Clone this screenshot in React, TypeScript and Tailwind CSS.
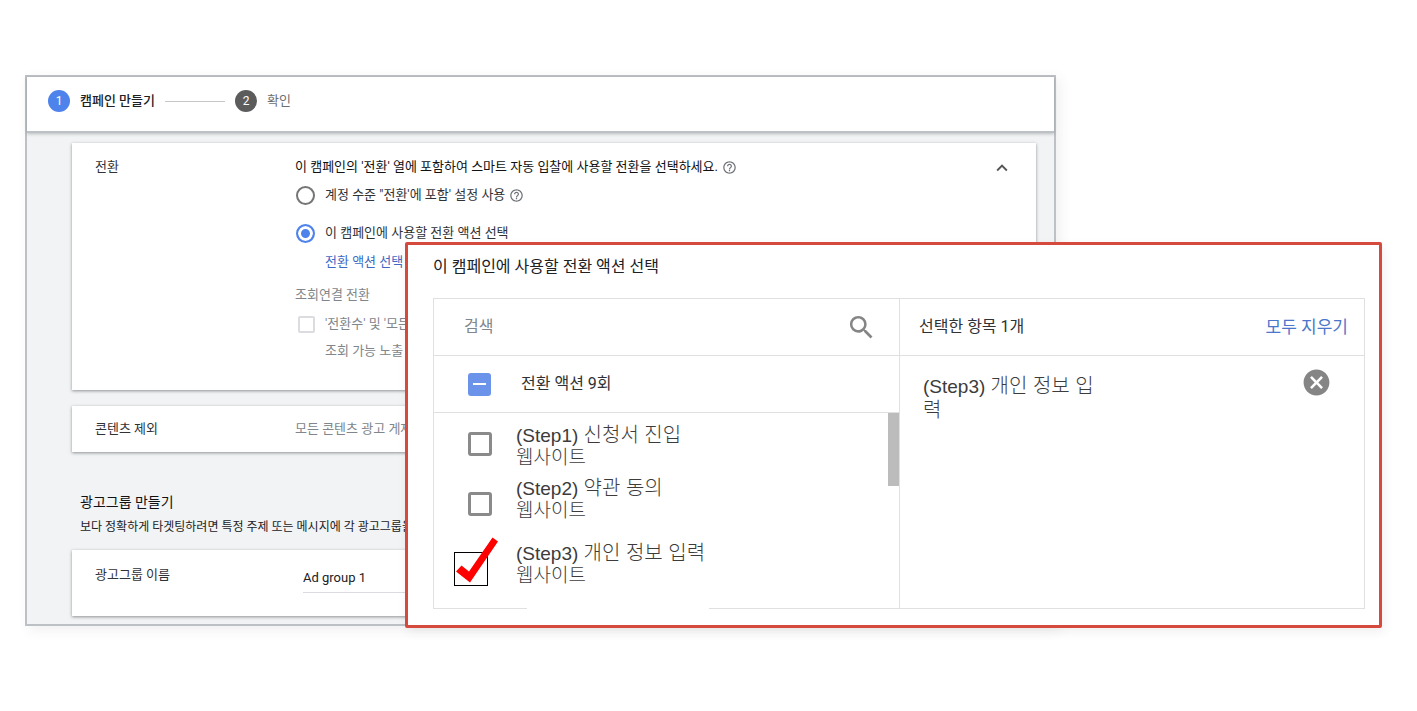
import { useEffect, useRef, type ReactNode } from "react";
import { MdCancel, MdExpandLess, MdHelpOutline, MdSearch } from "react-icons/md";

const CARD = "bg-white shadow-[0_1px_3px_rgba(60,64,67,0.55)]";

function Card({ label, children, className }: { label: string; children: ReactNode; className: string }) {
  return (
    <section className={`${CARD} flex px-[23px] ${className}`}>
      <h3 className="w-[200px] shrink-0 text-[#303236]">{label}</h3>
      {children}
    </section>
  );
}

function Help() {
  return (
    <button type="button" aria-label="도움말" className="text-[#6f7377]">
      <MdHelpOutline size={15} />
    </button>
  );
}

const RADIO = "mt-px ml-px size-[19px] shrink-0 appearance-none rounded-full border-2";

function Stepper() {
  return (
    <header className="relative flex h-14 items-center border-b-2 border-[#bdc1c6] bg-white pb-1.5 pl-[21px] shadow-[0_1px_3px_rgba(60,64,67,0.3)]">
      <ol className="flex items-center gap-2.5">
        <li className="flex items-center gap-2.5 font-medium text-[#202124]">
          <span className="flex size-[22px] items-center justify-center rounded-full bg-[#4f83ec] text-xs font-normal text-white">1</span>
          캠페인 만들기
        </li>
        <li aria-hidden="true" className="h-px w-[60px] bg-[#c4c6c8]" />
        <li className="flex items-center gap-2.5 text-[#6b6f73]">
          <span className="flex size-[22px] items-center justify-center rounded-full bg-[#5c5c5c] text-xs text-white">2</span>
          확인
        </li>
      </ol>
    </header>
  );
}

function CampaignPanel() {
  return (
    <div className="mr-[326px] border-2 border-[#bdc1c6] bg-[#f1f3f4] text-[13px] leading-5 shadow-[4px_4px_12px_rgba(60,64,67,0.08)]">
      <Stepper />
      <div className="pt-2.5 pr-[18px] pb-2 pl-[45px]">
        <Card label="전환" className="pt-3.5 pb-[29px]">
          <div className="flex min-w-0 flex-1 flex-col text-[#303236]">
            <p className="flex items-center gap-1 whitespace-nowrap text-[#111]">
              이 캠페인의 '전환' 열에 포함하여 스마트 자동 입찰에 사용할 전환을 선택하세요.
              <Help />
            </p>
            <div className="mt-2 flex items-center gap-1">
              <label className="flex gap-2.5">
                <input type="radio" name="scope" className={`${RADIO} border-[#757575]`} />
                계정 수준 "전환'에 포함' 설정 사용
              </label>
              <Help />
            </div>
            <label className="mt-[18px] flex gap-2.5">
              <input
                type="radio"
                name="scope"
                defaultChecked
                className={`${RADIO} border-[#4f83ec] bg-[#4f83ec] shadow-[inset_0_0_0_3px_white]`}
              />
              이 캠페인에 사용할 전환 액션 선택
            </label>
            <a href="#actions" className="mt-[9px] self-start pl-[30px] text-[#3c6ac4]">
              전환 액션 선택
            </a>
            <p className="mt-[13px] text-[#80868b]">조회연결 전환</p>
            <label className="mt-[9px] flex items-center gap-2.5 text-[#80868b]">
              <input type="checkbox" disabled className="ml-[3px] size-[17px] appearance-none rounded-xs border-2 border-[#dadce0] bg-white" />
              '전환수' 및 '모든 전환'
            </label>
            <p className="mt-[7px] pl-[30px] text-[#80868b]">조회 가능 노출 후</p>
          </div>
          <button type="button" aria-label="접기" className="flex size-[22px] items-center text-[#555]">
            <MdExpandLess size={22} />
          </button>
        </Card>

        <Card label="콘텐츠 제외" className="mt-4 items-center py-[13px]">
          <p className="text-[#80868b]">모든 콘텐츠 광고 게재</p>
        </Card>

        <h2 className="mt-10 pl-2 text-sm leading-5 text-[#111]">광고그룹 만들기</h2>
        <p className="mt-[5px] pl-2 text-xs leading-5 text-[#202124]">
          보다 정확하게 타겟팅하려면 특정 주제 또는 메시지에 각 광고그룹을 집중하세요.
        </p>

        <Card label="광고그룹 이름" className="mt-[13px] pt-[15px] pb-[23px]">
          <input
            aria-label="광고그룹 이름"
            defaultValue="Ad group 1"
            className="ml-2 h-7 w-[300px] border-b border-[#dadce0] pb-0.5 text-[#202124] outline-none"
          />
        </Card>
      </div>
    </div>
  );
}

function SelectAll() {
  const box = useRef<HTMLInputElement>(null);
  useEffect(() => {
    if (box.current) box.current.indeterminate = true;
  }, []);
  return (
    <label className="flex h-[57px] items-center gap-[30px] border-b border-[#e0e0e0] pl-[34px]">
      <span className="grid place-items-center">
        <input ref={box} type="checkbox" className="col-start-1 row-start-1 size-[23px] appearance-none rounded-[3px] bg-[#6b93ea]" />
        <span className="col-start-1 row-start-1 h-0.5 w-[13px] bg-white" />
      </span>
      전환 액션 9회
    </label>
  );
}

const BOX = "ml-3.5 size-6 appearance-none rounded-[3px] border-[3px] border-[#8a8a8a] bg-white";

function StepName({ step, name }: { step: string; name: string }) {
  return (
    <span className="font-['Liberation_Sans','Noto_Sans_CJK_KR',sans-serif] text-[19px] leading-[22px]">
      ({step}) <span className="text-xl leading-[22px] font-light">{name}</span>
    </span>
  );
}

function StepLabel({ id, step, name, className }: { id: string; step: string; name: string; className: string }) {
  return (
    <label htmlFor={id} className={`flex flex-col leading-[22px] ${className}`}>
      <StepName step={step} name={name} />
      <span className="text-[19px] leading-[22px] font-light">웹사이트</span>
    </label>
  );
}

function ActionList() {
  return (
    <div className="flex min-h-[195px] flex-1">
      <div className="flex w-[82px] shrink-0 flex-col gap-9 pt-[19px] pl-5">
        <input id="s1" type="checkbox" className={BOX} />
        <input id="s2" type="checkbox" className={BOX} />
        <div className="relative size-[34px]">
          <input id="s3" type="checkbox" defaultChecked className="block size-full appearance-none border border-black bg-white" />
          <svg viewBox="0 0 44 50" className="pointer-events-none absolute bottom-0 left-0 h-[50px] w-11" fill="#fe0000">
            <path d="M2 35.5 L7.5 29.5 L15 35.5 L38.5 1.5 L44 5.5 L16 46.5 Z" />
          </svg>
        </div>
      </div>
      <div className="flex flex-1 flex-col pt-[11px] text-[#3c3c3c]">
        <StepLabel id="s1" step="Step1" name="신청서 진입" className="" />
        <StepLabel id="s2" step="Step2" name="약관 동의" className="mt-2" />
        <StepLabel id="s3" step="Step3" name="개인 정보 입력" className="mt-5" />
      </div>
      <div className="h-[73px] w-[11px] bg-[#bcbcbc]" />
    </div>
  );
}

function ActionDialog() {
  return (
    <div
      role="dialog"
      id="actions"
      aria-label="전환 액션 선택"
      className="absolute top-[167px] right-0 left-[380px] rounded-xs border-3 border-[#d64a3e] bg-white pt-2.5 pr-3.5 pb-4 pl-[25px] text-base leading-6 text-[#303236] shadow-[2px_4px_10px_rgba(60,64,67,0.08)]"
    >
      <h2 className="text-[#202124]">이 캠페인에 사용할 전환 액션 선택</h2>
      <div className="mt-[19px] grid grid-cols-2">
        <div className="flex flex-col border-t border-l border-[#e0e0e0]">
          <div className="flex h-[57px] items-center border-b border-[#e0e0e0] pr-[22px] pl-[30px]">
            <input
              type="search"
              aria-label="검색"
              placeholder="검색"
              className="min-w-0 flex-1 outline-none placeholder:text-[#80868b]"
            />
            <button type="button" aria-label="검색 실행" className="text-[#858585]">
              <MdSearch size={31} />
            </button>
          </div>
          <SelectAll />
          <ActionList />
          <div className="flex h-px">
            <div className="w-[93px] bg-[#e0e0e0]" />
            <div className="w-[182px]" />
            <div className="flex-1 bg-[#e0e0e0]" />
          </div>
        </div>
        <div className="border border-[#e0e0e0]">
          <div className="flex h-[57px] items-center justify-between border-b border-[#e0e0e0] pr-4 pl-[19px]">
            <span>선택한 항목 1개</span>
            <button type="button" className="text-[17px] text-[#4a77c9]">
              모두 지우기
            </button>
          </div>
          <div className="flex items-start justify-between pt-[11px] pr-8 pl-[23px]">
            <p className="mt-2 w-[180px] leading-[22px] text-[#3c3c3c]">
              <StepName step="Step3" name="개인 정보 입력" />
            </p>
            <button type="button" aria-label="삭제" className="text-[#858585]">
              <MdCancel size={31} />
            </button>
          </div>
        </div>
      </div>
    </div>
  );
}

export default function App() {
  return (
    <main className="min-h-screen bg-white pt-[75px] pr-[35px] pl-[25px] font-[Roboto,'Noto_Sans_CJK_KR',sans-serif]">
      <div className="relative">
        <CampaignPanel />
        <ActionDialog />
      </div>
    </main>
  );
}
